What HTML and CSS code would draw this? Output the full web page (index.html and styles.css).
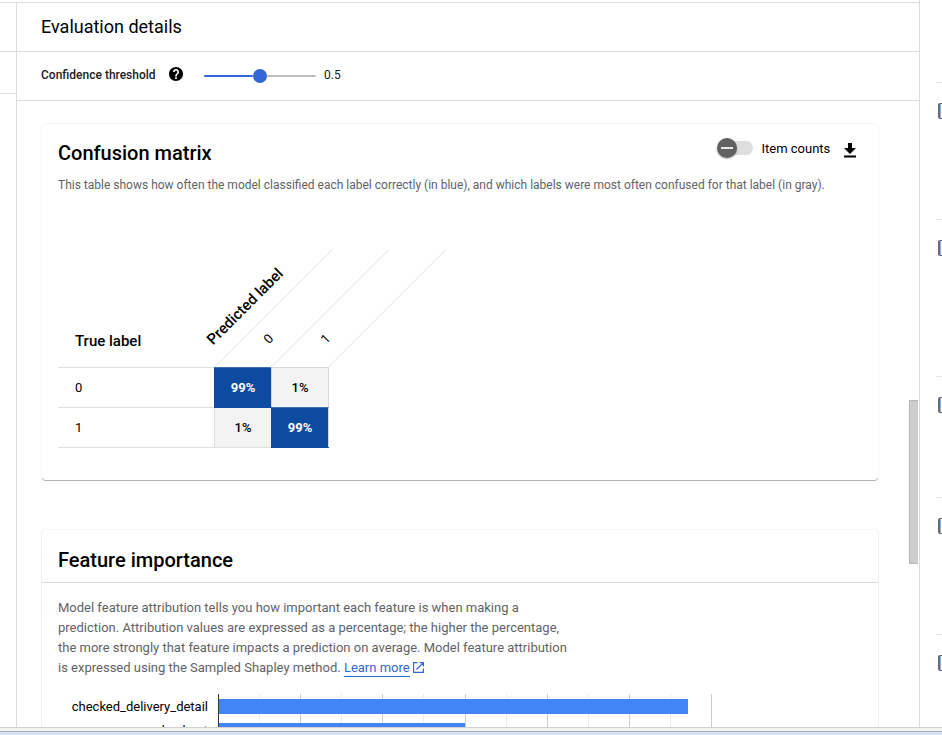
FILE: index.html
```html
<!DOCTYPE html>
<html lang="en">
<head>
<meta charset="utf-8">
<title>Evaluation details</title>
<link rel="stylesheet" href="styles.css">
</head>
<body>
<div class="app">
  <aside class="left"><div class="left-head"></div><div class="left-row"></div></aside>
  <main class="main">
    <header class="title">Evaluation details</header>
    <div class="threshold">
      <span class="threshold-label">Confidence threshold</span>
      <svg class="help" width="14" height="14" viewBox="2 2 20 20"><path d="M12 2C6.480 2 2 6.480 2 12s4.480 10 10 10 10-4.480 10-10S17.520 2 12 2zm1.200 17h-2.400v-2.400h2.400V19zm2.300-7.500l-1 1c-.8.8-1.300 1.400-1.300 2.900h-2.400v-.6c0-1.100.5-2.100 1.300-2.900l1.300-1.300c.4-.3.600-.8.600-1.400 0-1.100-.9-1.900-2-1.900s-2 .8-2 1.900H7.700c0-2.400 1.900-4.300 4.300-4.300s4.300 1.900 4.300 4.300c0 .9-.3 1.700-.8 2.300z"/></svg>
      <div class="slider"><div class="fill"></div><div class="knob"></div><div class="rest"></div></div>
      <span class="value">0.5</span>
    </div>
    <div class="content">
      <section class="card matrix-card">
        <div class="card-head">
          <h2>Confusion matrix</h2>
          <div class="toggle"><span class="toggle-knob"></span></div>
          <span class="toggle-label">Item counts</span>
          <svg class="download" width="12" height="15" viewBox="0 0 12 15"><path d="M4 0h4v5h4l-6 6-6-6h4zM0 12.500h12v2H0z"/></svg>
        </div>
        <p class="desc">This table shows how often the model classified each label correctly (in blue), and which labels were most often confused for that label (in gray).</p>
        <svg class="matrix-head" width="420" height="119" viewBox="0 0 420 119">
          <path class="diagonals" d="M156 118.500L274 .5M213 118.500L331 .5M270 118.500L388 .5"/>
          <text class="axis" x="17" y="97">True label</text>
          <text class="axis" transform="translate(155 96.500) rotate(-45)">Predicted label</text>
          <text class="tick" transform="translate(211 95.500) rotate(-45)">0</text>
          <text class="tick" transform="translate(268 95.500) rotate(-45)">1</text>
        </svg>
        <div class="matrix">
          <div class="row-label">0</div><div class="cell hit">99%</div><div class="cell miss">1%</div>
          <div class="row-label">1</div><div class="cell miss">1%</div><div class="cell hit">99%</div>
        </div>
      </section>
      <section class="card feature-card">
        <h2 class="feature-title">Feature importance</h2>
        <p class="feature-desc">Model feature attribution tells you how important each feature is when making a<br>prediction. Attribution values are expressed as a percentage; the higher the percentage,<br>the more strongly that feature impacts a prediction on average. Model feature attribution<br>is expressed using the Sampled Shapley method. <a class="link">Learn more</a><svg class="external" width="11" height="11" viewBox="0 0 11 11"><path d="M4.500 .6H.6v9.800h9.800V6.500M6.500 .6h3.900v3.900M10.400 .6L3.500 7.500"/></svg></p>
        <div class="chart">
          <div class="names"><div>checked_delivery_detail</div><div>checkout</div></div>
          <div class="plot">
            <svg class="grid" width="495" height="60"><path class="minor" d="M41.500 0v60M123.500 0v60M205.500 0v60M288.500 0v60M370.500 0v60M452.500 0v60"/><path class="major" d="M82.500 0v60M164.500 0v60M247.500 0v60M329.500 0v60M411.500 0v60M493.500 0v60"/><path class="zero" d="M.5 0v60"/></svg>
            <div class="bars"><div class="bar bar-first"></div><div class="bar bar-second"></div></div>
          </div>
        </div>
      </section>
      <div class="scroll-thumb"></div>
    </div>
  </main>
  <aside class="right">
    <div class="item first"><i></i></div>
    <div class="item tall"><i></i></div>
    <div class="item short"><i></i></div>
    <div class="item"><i></i></div>
    <div class="item"><i></i></div>
  </aside>
</div>
<footer class="window-edge"></footer>
</body>
</html>
```
FILE: styles.css
```css
* { box-sizing: border-box; }
body { margin: 0; height: 735px; overflow: hidden; background: #fff; color: #000; font: 13px/20px Roboto, "Liberation Sans", sans-serif; }
h2, p { margin: 0; }
svg { display: block; flex: none; }

.app { display: flex; height: 727px; overflow: hidden; }
.left { width: 16px; padding-top: 2px; }
.left-head { height: 50px; border: solid #dadce0; border-width: 1px 0; }
.left-row { height: 42px; border-bottom: 1px solid #dadce0; }
.main { width: 903px; margin-top: 2px; border-left: 1px solid #dadce0; border-top: 1px solid #dadce0; }
.title { height: 49px; padding-left: 24px; border-bottom: 1px solid #dadce0; font-size: 18px; line-height: 48px; }
.threshold { display: flex; align-items: center; height: 49px; padding: 0 0 2px 24px; border-bottom: 1px solid #dadce0; }
.threshold-label { width: 115px; font-size: 12px; font-weight: 500; color: #202124; white-space: nowrap; }
.help { margin: 0 1px 2px 13px; }
.slider { display: flex; align-items: center; width: 112px; margin: 2px 8px 0 20px; }
.fill, .rest { flex: 1; height: 2px; background: #3367d6; border-radius: 1px; }
.rest { background: #bdbdbd; }
.knob { width: 14px; height: 14px; border-radius: 50%; background: #3367d6; }
.value { font-size: 12px; color: #202124; }

.content { position: relative; padding: 23px 0 0 25px; }
.card { width: 836px; background: #fff; border-radius: 4px; box-shadow: 0 0 2px rgba(0,0,0,.14), 0 1px 1px rgba(0,0,0,.24); }
.matrix-card { height: 356px; margin-bottom: 50px; padding: 0 16px; box-shadow: 0 0 2px rgba(0,0,0,.13), 0 1px 0 rgba(0,0,0,.27); }
.card-head { display: flex; height: 51px; }
h2 { font-size: 20px; font-weight: 500; line-height: 58px; }
.card-head h2 { flex: 1; }
.toggle { width: 34px; height: 14px; margin: 17px 8px 0 0; border-radius: 7px; background: #dedede; }
.toggle-knob { display: flex; align-items: center; justify-content: center; width: 20px; height: 20px; margin: -3px 0 0 -2px; border-radius: 50%; background: #616161; box-shadow: 0 1px 2px rgba(0,0,0,.3); }
.toggle-knob::before { content: ""; width: 12px; height: 2px; background: #e8e8e8; }
.toggle-label { width: 69px; margin: 15px 14px 0 0; padding-left: .5px; white-space: nowrap; }
.download { margin: 19px 6px 0 0; }
.desc { color: #5f6368; font-size: 12px; white-space: nowrap; }
.matrix-head { margin-top: 54px; }
.diagonals { fill: none; stroke: #e0e0e0; }
.axis { font-size: 15px; font-weight: 500; }
.tick { font-size: 13px; }
.matrix { display: grid; grid-template-columns: 156px 57px 58px; grid-auto-rows: 40px; width: 271px; margin-top: -1px; border-bottom: 1px solid #e0e0e0; }
.row-label { padding-left: 17px; border-top: 1px solid #e0e0e0; line-height: 39px; }
.cell { border: solid #dadada; border-width: 1px 0 0 1px; text-align: center; font-weight: 500; line-height: 39px; }
.cell:nth-child(3n) { border-right: 1px solid #dadada; }
.miss { background: #f3f3f3; }
.hit { position: relative; background: #0d4ba0; background-clip: padding-box; border-left-color: #0d4ba0; border-top-color: #3d6fb3; box-shadow: 0 1px #0d4ba0; color: #fff; font-weight: 700; }

.feature-card { height: 300px; }
.feature-title { height: 53px; padding-left: 16px; border-bottom: 1px solid #dadce0; line-height: 60px; }
.feature-desc { padding: 15px 16px 0; color: #5f6368; white-space: nowrap; }
.link { color: #3367d6; border-bottom: 1px solid #3367d6; padding-bottom: 1px; }
.external { display: inline-block; margin-left: 3px; vertical-align: -1px; fill: none; stroke: #3367d6; stroke-width: 1.200; }
.chart { display: flex; margin-top: 16px; }
.names { width: 166px; padding-top: 1px; text-align: right; line-height: 24px; }
.plot { display: grid; margin-left: 10px; }
.grid, .bars { grid-area: 1 / 1; }
.minor { stroke: #ebebeb; }
.major { stroke: #ccc; }
.zero { stroke: #333; }
.bars { display: flex; flex-direction: column; gap: 9px; padding: 5px 0 0 1px; }
.bar { height: 15px; background: #4285f4; }
.bar-first { width: 469px; }
.bar-second { width: 246px; }
.scroll-thumb { position: absolute; top: 299px; right: 1px; width: 9px; height: 164px; background: #cdcdcd; border: solid #b5b5b5; border-width: 1px 0 1px 1px; }

.right { width: 23px; padding: 82px 0 0 16px; border-left: 1px solid #dadce0; }
.item { height: 137px; border-top: 1px solid #e5e5e5; padding: 20px 0 0 2px; }
.item.tall { height: 157px; }
.item.short { height: 121px; }
.item i { display: block; width: 12px; height: 16px; border: solid #5f6368; border-width: 1px 1px 1px 2px; border-left-color: #77685f; border-radius: 2px; box-shadow: inset 1px 0 #8ab8ee; }
.window-edge { height: 8px; border-top: 1px solid #d2d2d2; background: linear-gradient(#f5f5f5 3px, #a9b2be 3px, #a9b2be 4px, #d4e2f4 4px); }
```
